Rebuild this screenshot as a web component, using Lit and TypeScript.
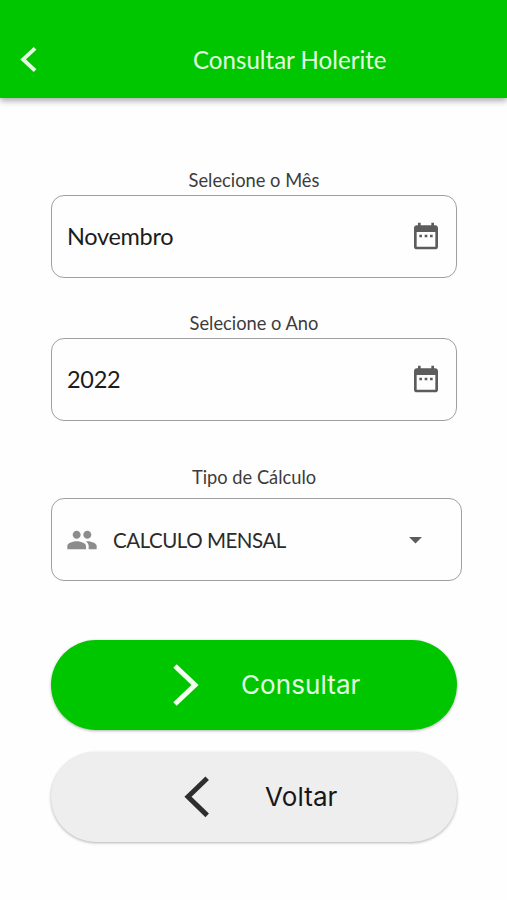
import { LitElement, html, css, svg } from "lit";
import { customElement, property } from "lit/decorators.js";

const calendar = svg`<path d="M9 11H7v2h2v-2zm4 0h-2v2h2v-2zm4 0h-2v2h2v-2zm2-7h-1V2h-2v2H8V2H6v2H5c-1.11 0-1.99.9-1.99 2L3 20c0 1.1.89 2 2 2h14c1.1 0 2-.9 2-2V6c0-1.1-.9-2-2-2zm0 16H5V9h14v11z"/>`;

@customElement("date-field")
export class DateField extends LitElement {
  @property() label = "";
  @property() value = "";

  static styles = css`
    :host { display: block; }
    .label { height: 24px; line-height: 24px; text-align: center; font-size: 18.3px; color: #3c3c3c; margin-bottom: 3px; }
    .box { box-sizing: border-box; height: 83px; border: 1px solid #a0a0a0; border-radius: 13px; display: flex; align-items: center; justify-content: space-between; padding: 0 14.4px 2px 15px; }
    .value { font-size: 23.5px; line-height: 30px; letter-spacing: -0.3px; color: #1c1c1c; }
    .icon { width: 32px; height: 32px; fill: #5c5c5c; }
  `;

  render() {
    return html`
      <div class="label">${this.label}</div>
      <div class="box">
        <span class="value">${this.value}</span>
        <svg class="icon" viewBox="0 0 24 24">${calendar}</svg>
      </div>`;
  }
}

@customElement("app-root")
export class AppRoot extends LitElement {
  static styles = css`
    :host { display: block; height: 900px; overflow: hidden; background: #fefefe; font-family: Lato, "Open Sans", sans-serif; }
    .bar { box-sizing: border-box; height: 98px; padding: 21px 0 0 17px; background: #00c600; display: flex; align-items: center; box-shadow: 0 3px 6px rgba(0, 0, 0, 0.32); }
    .back { width: 24px; height: 32px; flex: none; }
    .title { margin: 0 0 0 152px; font-weight: 400; font-size: 24.1px; line-height: 32px; color: #e4fbe0; white-space: nowrap; }
    .form { display: flex; flex-direction: column; width: 406px; padding: 70px 0 0 51px; }
    .year { margin-top: 33px; }
    .label { margin-top: 44px; height: 24px; line-height: 24px; text-align: center; font-size: 18.3px; color: #3c3c3c; }
    .select { box-sizing: border-box; width: 411px; height: 83px; margin-top: 9px; border: 1px solid #a0a0a0; border-radius: 13px; display: flex; align-items: center; padding: 0 30px 0 14px; }
    .people { width: 32px; height: 32px; fill: #8c8c8c; flex: none; }
    .choice { flex: 1; margin-left: 15px; font-size: 20.5px; line-height: 28px; letter-spacing: -0.47px; color: #2b2b2b; }
    .drop { width: 31px; height: 31px; fill: #5c5c5c; }
    .btn { box-sizing: border-box; border: 0; border-radius: 45px; height: 90px; width: 406px; padding: 0; margin: 59px 0 0; display: flex; align-items: center; font: 400 26px/34px Inter, sans-serif; text-align: left; box-shadow: 0 1px 3px rgba(0, 0, 0, 0.3); }
    .primary { background: #00c600; color: #e4fbe0; padding-left: 119px; }
    .secondary { background: #eeeeee; color: #171717; margin-top: 22px; padding-left: 131px; }
    .chev { width: 30px; height: 46px; flex: none; }
    .primary span { margin-left: 41px; letter-spacing: 0.08px; }
    .secondary span { margin-left: 53px; letter-spacing: 0.1px; }
  `;

  render() {
    return html`
      <header class="bar">
        <svg class="back" viewBox="0 0 24 32"><path d="M18.1 4.4L6.1 15.4l12 11.2" fill="none" stroke="#e4fbe0" stroke-width="3.9"/></svg>
        <h1 class="title">Consultar Holerite</h1>
      </header>
      <main class="form">
        <date-field label="Selecione o Mês" value="Novembro"></date-field>
        <date-field class="year" label="Selecione o Ano" value="2022"></date-field>
        <div class="label">Tipo de Cálculo</div>
        <div class="select">
          <svg class="people" viewBox="0 0 24 24"><path d="M16 11c1.66 0 2.99-1.34 2.99-3S17.66 5 16 5c-1.66 0-3 1.34-3 3s1.34 3 3 3zm-8 0c1.66 0 2.99-1.34 2.99-3S9.66 5 8 5C6.34 5 5 6.34 5 8s1.34 3 3 3zm0 2c-2.33 0-7 1.17-7 3.5V19h14v-2.5c0-2.33-4.67-3.5-7-3.5zm8 0c-.29 0-.62.02-.97.05 1.16.84 1.97 1.97 1.97 3.45V19h6v-2.5c0-2.33-4.67-3.5-7-3.5z"/></svg>
          <span class="choice">CALCULO MENSAL</span>
          <svg class="drop" viewBox="0 0 24 24"><path d="M7 10l5 5 5-5z"/></svg>
        </div>
        <button class="btn primary">
          <svg class="chev" viewBox="0 0 30 46"><path d="M5 4l20 19L5 42" fill="none" stroke="#f4fff2" stroke-width="5"/></svg>
          <span>Consultar</span>
        </button>
        <button class="btn secondary">
          <svg class="chev" viewBox="0 0 30 46"><path d="M25.2 4.2L6 22.8l19.2 18.6" fill="none" stroke="#2e2e30" stroke-width="5"/></svg>
          <span>Voltar</span>
        </button>
      </main>`;
  }
}
